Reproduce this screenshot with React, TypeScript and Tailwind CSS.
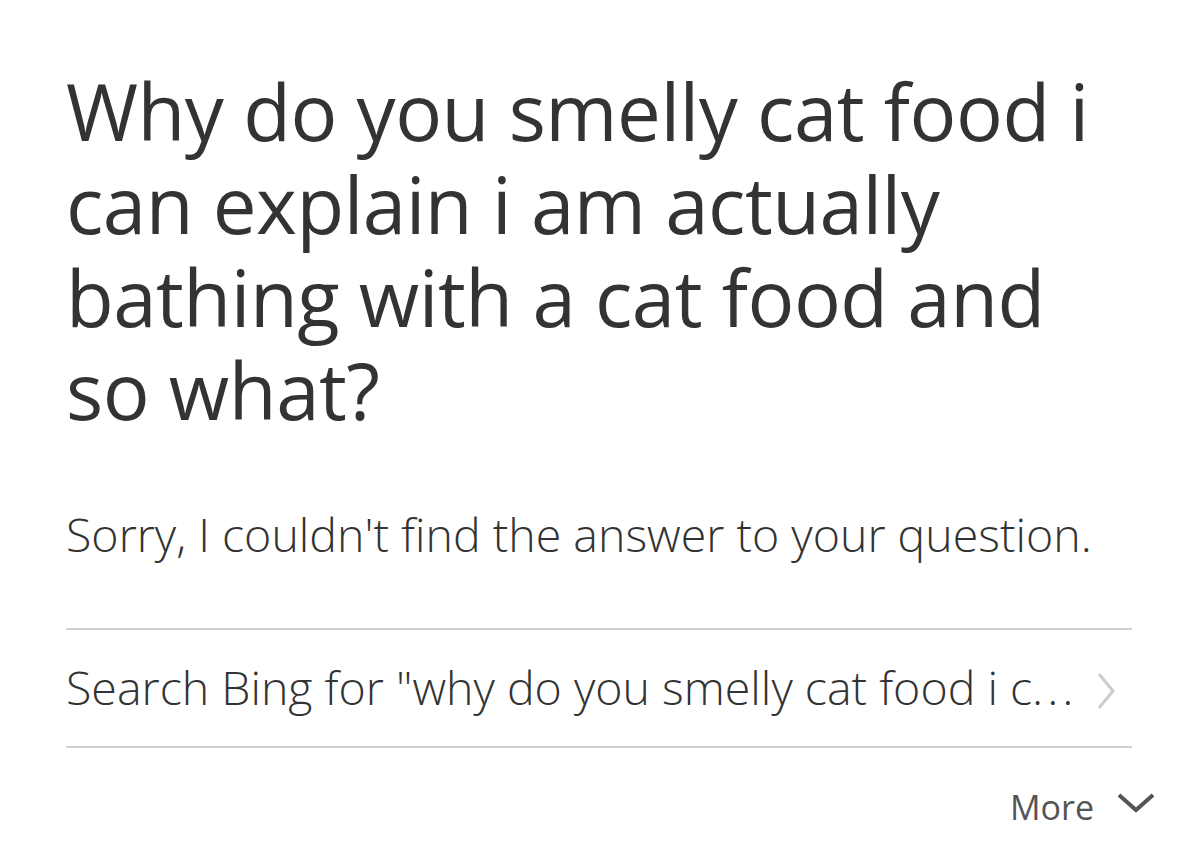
import React from "react";

export default function App() {
  return (
    <div
      className="w-[1191px] h-[843px] bg-white overflow-hidden pl-[66px] pr-[59px]"
      style={{ fontFamily: '"Open Sans", "Noto Sans", sans-serif' }}
    >
      <h1 className="pt-[65px] text-[78px] leading-[93px] text-[#333333] font-normal tracking-[-0.5px]">
        Why do you smelly cat food i can explain i am actually bathing with a cat food and so what?
      </h1>
      <p className="mt-[69px] text-[46.5px] leading-[56px] font-light text-[#333333] whitespace-nowrap">
        Sorry, I couldn't find the answer to your question.
      </p>
      <div className="mt-[66px] border-t-2 border-[#d2d2d2]" />
      <div className="h-[116px] flex items-center justify-between">
        <span className="text-[46.5px] font-light text-[#333333] whitespace-nowrap">
          Search Bing for "why do you smelly cat food i c<span className="tracking-[4px]">...</span>
        </span>
        <svg width="20" height="38" viewBox="0 0 20 38" className="mr-[16px] mt-[6px]">
          <path d="M3 2 L17 19 L3 36" fill="none" stroke="#cccccc" strokeWidth="3" />
        </svg>
      </div>
      <div className="border-t-2 border-[#d2d2d2]" />
      <div className="flex justify-end items-center mt-[34px] -mr-[24px]">
        <span className="text-[34px] text-[#555555]">More</span>
        <svg width="40" height="24" viewBox="0 0 40 24" className="ml-[22px] -mt-[10px]">
          <path d="M3 4 L20 19 L37 4" fill="none" stroke="#555555" strokeWidth="4" />
        </svg>
      </div>
    </div>
  );
}
